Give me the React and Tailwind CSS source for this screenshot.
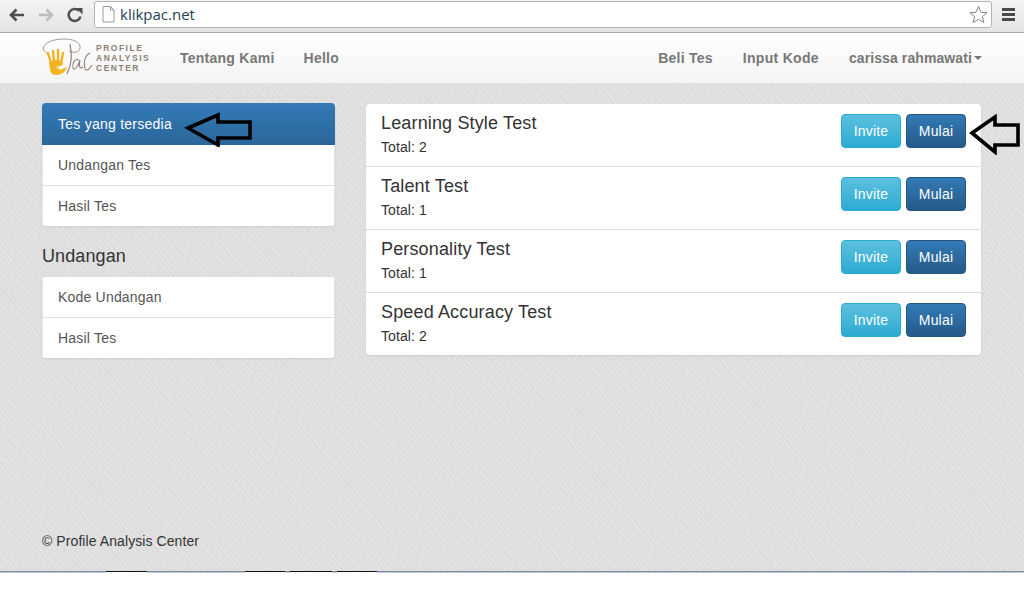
import React from "react";

const font = "font-['Liberation_Sans',Arial,sans-serif]";

function Arrow({ className, viewBox, d }) {
  return (
    <svg className={className} viewBox={viewBox} fill="none" stroke="#000" strokeWidth="3.6" strokeLinejoin="miter">
      <path d={d} />
    </svg>
  );
}

function Logo() {
  return (
    <div className="flex items-center w-[108px] h-[40px]">
      <svg width="54" height="40" viewBox="0 0 54 40" className="shrink-0" fill="none">
        <path d="M1 11 C1 5 11 1 22 1 C31 1 39 4 38 10 C37 15 31 15 27 13" stroke="#9a8f85" strokeWidth="0.9" />
        <path d="M1 11 C3 14 5 15 6 17" stroke="#9a8f85" strokeWidth="0.9" />
        <path d="M28 6 C30 15 30 26 25 36" stroke="#8f8378" strokeWidth="1.2" />
        <path d="M37 22 C33 20 30 25 31 30 C32 33 36 29 38 22 C37 27 37 32 41 29" stroke="#8f8378" strokeWidth="1.1" />
        <path d="M48 15 C43 17 41 25 43 31 C45 34 48 30 50 27" stroke="#8f8378" strokeWidth="1.1" />
        <path d="M9 25 L6 15 M12 24 L11 13 M16 24 L16 12 M19 25 L21 15" stroke="#f3b31f" strokeWidth="2.4" strokeLinecap="round" />
        <path d="M7 25 C10 21 18 21 21 25 C21 28 17 28 16 31 C18 32 21 31 25 29 C24 33 20 37 14 37 C10 37 8 34 8 31 C8 28 7 27 7 25 Z" fill="#f3b31f" />
        <path d="M14 30 C16 28 18 28 20 29" stroke="#fff" strokeWidth="1" />
      </svg>
      <div className="text-[8.5px] leading-[10px] font-bold tracking-[1.5px] text-[#8c8076] whitespace-nowrap">
        <div>PROFILE</div>
        <div>ANALYSIS</div>
        <div>CENTER</div>
      </div>
    </div>
  );
}

function BrowserBar() {
  return (
    <div className="h-[33px] flex items-start bg-gradient-to-b from-[#f3f3f3] to-[#e4e4e4] border-b border-[#a8a8a8]">
      <div className="w-[94px] h-[30px] shrink-0 flex items-center">
        <svg width="18" height="16" viewBox="0 0 18 16" className="ml-[8px]" fill="none" stroke="#4f4f4f" strokeWidth="2.6">
          <path d="M16 8 H3 M8.5 2.5 L3 8 L8.5 13.5" />
        </svg>
        <svg width="18" height="16" viewBox="0 0 18 16" className="ml-[11px]" fill="none" stroke="#bdbdbd" strokeWidth="2.6">
          <path d="M2 8 H15 M9.5 2.5 L15 8 L9.5 13.5" />
        </svg>
        <svg width="16" height="16" viewBox="0 0 16 16" className="ml-[12px]" fill="none">
          <path d="M13.5 9.5 A6 6 0 1 1 12 3.8" stroke="#4f4f4f" strokeWidth="2.5" />
          <path d="M9 1 H15.5 V7.5 Z" fill="#4f4f4f" />
        </svg>
      </div>
      <div className="w-[898px] h-[27px] mt-[1px] flex items-center bg-white border border-[#b4b4b4] rounded-[3px]">
        <svg width="13" height="17" viewBox="0 0 13 17" className="ml-[7px]" fill="#fff" stroke="#9a9a9a">
          <path d="M1 .5 H8.5 L12 4 V16 H1 Z M8.5 .5 V4 H12" />
        </svg>
        <span className="ml-[5px] text-[15px] text-[#1f3f55] font-['Open_Sans',sans-serif]">klikpac.net</span>
        <svg width="19" height="19" viewBox="0 0 20 19" className="ml-auto mr-[3px]" fill="#fff" stroke="#7d7d7d">
          <path d="M10 1 L12.6 7.2 L19 7.6 L14.1 11.8 L15.7 18 L10 14.6 L4.3 18 L5.9 11.8 L1 7.6 L7.4 7.2 Z" />
        </svg>
      </div>
      <div className="flex-1 flex flex-col items-center gap-[2px] mt-[8px]">
        <span className="w-[13px] h-[3px] bg-[#4a4a4a]" />
        <span className="w-[13px] h-[3px] bg-[#4a4a4a]" />
        <span className="w-[13px] h-[3px] bg-[#4a4a4a]" />
      </div>
    </div>
  );
}

function NavLink({ children, className = "" }) {
  return <a className={`text-[14px] font-bold text-[#777] whitespace-nowrap ${className}`}>{children}</a>;
}

function Nav() {
  return (
    <nav className="h-[51px] flex items-center pl-[42px] pr-[42px] bg-gradient-to-b from-white to-[#f4f4f4] border-b border-[#e2e2e2] shadow-[0_1px_3px_rgba(0,0,0,0.06)]">
      <Logo />
      <NavLink className="ml-[30px] tracking-[0.25px]">Tentang Kami</NavLink>
      <NavLink className="ml-[29px] tracking-[0.25px]">Hello</NavLink>
      <NavLink className="ml-auto tracking-[0.25px]">Beli Tes</NavLink>
      <NavLink className="ml-[30px] tracking-[0.3px]">Input Kode</NavLink>
      <NavLink className="ml-[30px] flex items-center tracking-[0.1px]">
        carissa rahmawati
        <span className="ml-[2px] w-0 h-0 border-x-[4px] border-x-transparent border-t-[4px] border-t-[#777]" />
      </NavLink>
    </nav>
  );
}

function SideItem({ children, first }) {
  return (
    <a
      className={`block px-[15px] text-[14px] tracking-[0.2px] text-[#555] bg-white border-x border-[#e6e6e6] ${
        first ? "h-[40px] leading-[40px]" : "h-[41px] leading-[40px] border-t border-t-[#ddd]"
      }`}
    >
      {children}
    </a>
  );
}

function TestRow({ title, total, first }) {
  return (
    <div className={`flex items-start justify-between pl-[15px] pr-[15px] pt-[10px] ${first ? "h-[62px]" : "h-[63px] border-t border-[#ddd]"}`}>
      <div>
        <div className="text-[18px] leading-[20px] tracking-[0.15px] text-[#333] -mt-[1px]">{title}</div>
        <div className="mt-[4px] text-[14px] leading-[20px] tracking-[0.1px] text-[#333]">{total}</div>
      </div>
      <div className="flex gap-[5px]">
        <button className="w-[60px] h-[34px] rounded-[4px] text-[14px] tracking-[0.2px] text-white border border-[#2aabd2] bg-gradient-to-b from-[#5bc0de] to-[#2aabd2]">
          Invite
        </button>
        <button className="w-[60px] h-[34px] rounded-[4px] text-[14px] tracking-[0.2px] text-white border border-[#245580] bg-gradient-to-b from-[#337ab7] to-[#265a88]">
          Mulai
        </button>
      </div>
    </div>
  );
}

function BottomEdge() {
  const seg = "h-[2px] border-t border-[#7d8ca3] bg-[#bccbdd]";
  const blk = "h-[1px] bg-[#111]";
  return (
    <div className="h-[29px] bg-white shrink-0 flex items-start">
      <div className={`w-[106px] ${seg}`} />
      <div className={`w-[41px] ${blk}`} />
      <div className={`w-[98px] ${seg}`} />
      <div className={`w-[40px] ${blk}`} />
      <div className={`w-[5px] ${seg}`} />
      <div className={`w-[42px] ${blk}`} />
      <div className={`w-[5px] ${seg}`} />
      <div className={`w-[40px] ${blk}`} />
      <div className={`flex-1 ${seg}`} />
    </div>
  );
}

export default function App() {
  return (
    <div className={`w-[1024px] h-[600px] overflow-hidden flex flex-col bg-white relative ${font}`}>
      <BrowserBar />
      <Nav />
      <main className="flex-1 flex flex-col px-[42px] pt-[19px] bg-[#dedede] bg-[repeating-linear-gradient(50deg,rgba(255,255,255,0.2)_0px,rgba(255,255,255,0.2)_1px,transparent_1px,transparent_4px),repeating-linear-gradient(50deg,rgba(0,0,0,0.018)_0px,rgba(0,0,0,0.018)_1px,transparent_1px,transparent_7px),repeating-linear-gradient(47deg,rgba(255,255,255,0.08)_0px,rgba(255,255,255,0.08)_1px,transparent_1px,transparent_11px)]">
        <div className="flex items-start gap-[31px]">
          <div className="w-[293px] shrink-0">
            <div className="rounded-[4px] overflow-hidden shadow-[0_1px_2px_rgba(0,0,0,0.075)]">
              <a className="block h-[42px] leading-[42px] px-[16px] text-[14px] tracking-[0.25px] text-white bg-gradient-to-b from-[#337ab7] to-[#2b669a]">
                Tes yang tersedia
              </a>
              <SideItem first>Undangan Tes</SideItem>
              <SideItem>Hasil Tes</SideItem>
            </div>
            <h4 className="mt-[20px] h-[31px] text-[18px] leading-[20px] tracking-[0.1px] text-[#333]">Undangan</h4>
            <div className="rounded-[4px] overflow-hidden shadow-[0_1px_2px_rgba(0,0,0,0.075)]">
              <SideItem first>Kode Undangan</SideItem>
              <SideItem>Hasil Tes</SideItem>
            </div>
          </div>
          <div className="w-[615px] mt-[1px] bg-white rounded-[4px] shadow-[0_1px_2px_rgba(0,0,0,0.075)]">
            <TestRow first title="Learning Style Test" total="Total: 2" />
            <TestRow title="Talent Test" total="Total: 1" />
            <TestRow title="Personality Test" total="Total: 1" />
            <TestRow title="Speed Accuracy Test" total="Total: 2" />
          </div>
        </div>
        <footer className="mt-auto mb-[20px] text-[14px] leading-[20px] tracking-[0.08px] text-[#333]">© Profile Analysis Center</footer>
      </main>
      <BottomEdge />
      <Arrow
        className="absolute left-[184px] top-[112px] w-[70px] h-[35px]"
        viewBox="0 0 70 35"
        d="M4 16 L34 3 L34 10 L66 10 L66 26 L34 26 L34 33 Z"
      />
      <Arrow
        className="absolute left-[968px] top-[114px] w-[54px] h-[41px]"
        viewBox="0 0 54 41"
        d="M4 19 L27 3 L27 11 L50 11 L50 31 L27 31 L27 38 Z"
      />
    </div>
  );
}
